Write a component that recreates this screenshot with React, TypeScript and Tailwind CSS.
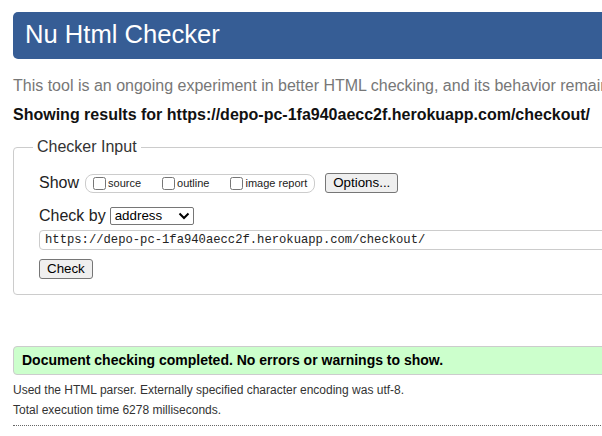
import { useState } from "react";

const url = "https://depo-pc-1fa940aecc2f.herokuapp.com/checkout/";

function Box({ label }: { label: string }) {
  const [on, setOn] = useState(false);
  return (
    <label className="flex items-center gap-[2px] text-[11px] text-[#222]">
      <input
        type="checkbox"
        checked={on}
        onChange={(e) => setOn(e.target.checked)}
        className="m-0 w-[13px] h-[13px]"
      />
      <span>{label}</span>
    </label>
  );
}

export default function App() {
  return (
    <div className="w-full h-[436px] overflow-hidden bg-white font-['Liberation_Sans',Arial,sans-serif]">
      <div className="w-[1000px] px-[13px] pt-[12px]">
        {/* Title bar */}
        <h1 className="bg-[#365d95] text-white rounded-[5px] pl-[12px] pt-[7px] pb-[10px] text-[25.6px] leading-[30px] font-normal">
          Nu Html Checker
        </h1>

        <p className="mt-[17px] text-[16px] leading-[20px] text-[#777] whitespace-nowrap">
          This tool is an ongoing experiment in better HTML checking, and its behavior remains subject to change
        </p>
        <p className="mt-[9px] text-[16px] leading-[20px] font-bold text-[#111] whitespace-nowrap">
          Showing results for {url}
        </p>

        {/* Checker input */}
        <fieldset className="mt-[12px] border border-[#ccc] rounded-[4px] px-[19px] pt-[16px] pb-[15px]">
          <legend className="px-[4px] text-[16px] leading-[20px] text-[#333]">Checker Input</legend>
          <div className="ml-[6px] flex flex-col">
            <div className="h-[20px] flex items-center text-[16px] text-[#222]">
              <span>Show</span>
              <div className="ml-[6px] h-[19px] flex items-center gap-[21px] border border-[#ccc] rounded-[8px] pl-[7px] pr-[7px]">
                <Box label="source" />
                <Box label="outline" />
                <Box label="image report" />
              </div>
              <button className="ml-[10px] h-[20px] px-[7px] bg-[#efefef] border border-[#767676] rounded-[3px] text-[13.33px] leading-none text-black">
                Options...
              </button>
            </div>

            <div className="mt-[13px] h-[20px] flex items-center text-[16px] text-[#222]">
              <span>Check by</span>
              <div className="ml-[4px] w-[84px] h-[18px] flex items-center justify-between border border-[#767676] rounded-[2px] pl-[4px] pr-[3px] text-[13.33px] text-black">
                <span>address</span>
                <svg width="12" height="8" viewBox="0 0 12 8" fill="none">
                  <path d="M1.5 1.5 L6 6 L10.5 1.5" stroke="#000" strokeWidth="2" />
                </svg>
              </div>
            </div>

            <div className="mt-[4px] h-[20px] flex items-center border border-[#ccc] rounded-[4px] pl-[5px] font-['Liberation_Mono',monospace] text-[12.2px] text-[#222]">
              {url}
            </div>

            <div className="mt-[9px] flex">
              <button className="h-[20px] px-[7px] bg-[#efefef] border border-[#767676] rounded-[3px] text-[13.33px] leading-none text-black">
                Check
              </button>
            </div>
          </div>
        </fieldset>

        {/* Results */}
        <div className="mt-[51px] border border-[#ccc] rounded-[4px] bg-[#ccffcc] pl-[8px] text-[14px] leading-[27px] font-bold text-black">
          Document checking completed. No errors or warnings to show.
        </div>

        <div className="mt-[5px] pb-[5px] border-b border-dotted border-[#666] text-[12px] leading-[20px] text-[#333]">
          <p>Used the HTML parser. Externally specified character encoding was utf-8.</p>
          <p>Total execution time 6278 milliseconds.</p>
        </div>
      </div>
    </div>
  );
}
